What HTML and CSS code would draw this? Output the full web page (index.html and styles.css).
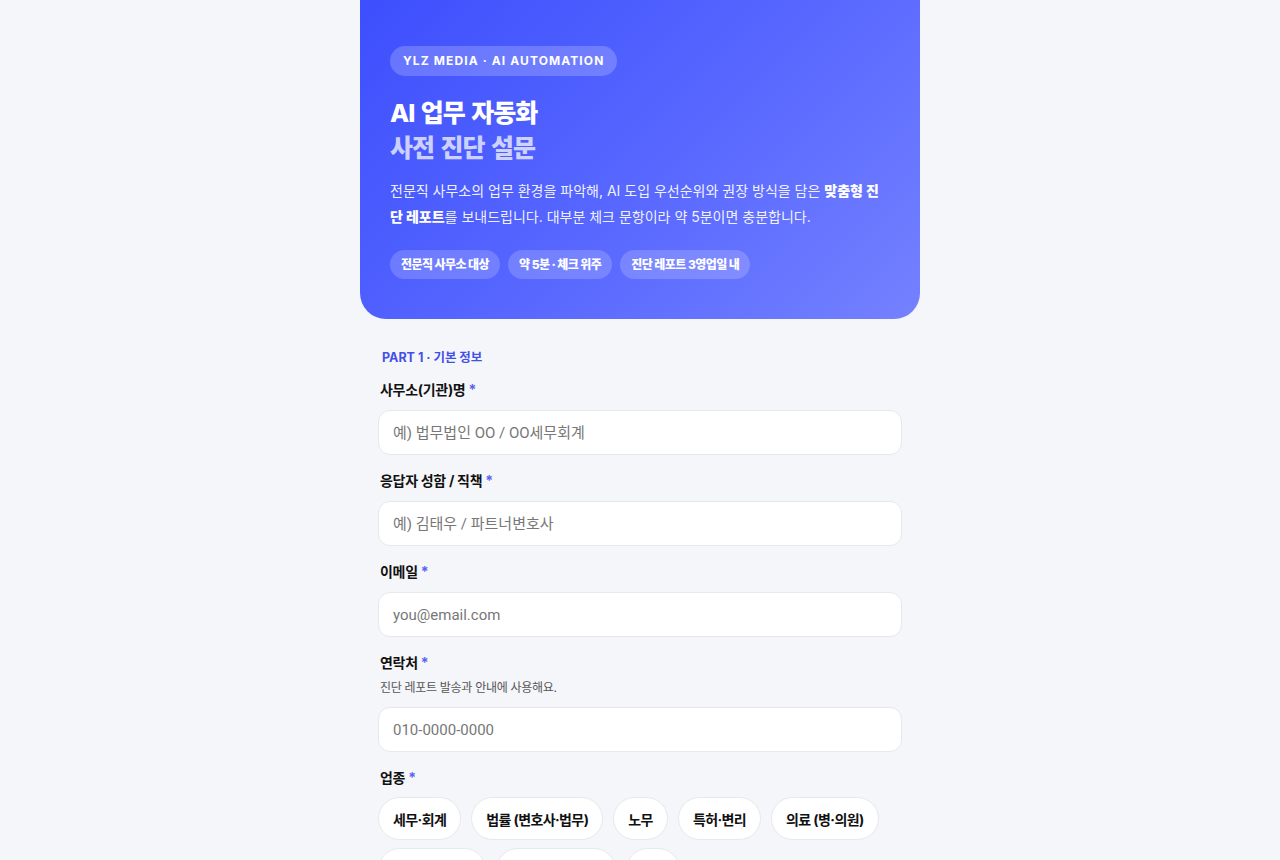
FILE: index.html
```html
<!DOCTYPE html>
<html lang="ko">
<head>
<meta charset="utf-8">
<link rel="stylesheet" href="styles.css">
</head>
<body>

<div class="survey">
  <!-- 상단 소개 -->
  <header class="hero">
    <span class="hero-badge">YLZ MEDIA · AI AUTOMATION</span>
    <h1 class="hero-title">AI 업무 자동화<span>사전 진단 설문</span></h1>
    <p class="hero-desc">전문직 사무소의 업무 환경을 파악해, AI 도입 우선순위와 권장 방식을 담은 <strong>맞춤형 진단 레포트</strong>를 보내드립니다. 대부분 체크 문항이라 약 5분이면 충분합니다.</p>
    <div class="hero-tags">
      <span class="hero-tag">전문직 사무소 대상</span>
      <span class="hero-tag">약 5분 · 체크 위주</span>
      <span class="hero-tag">진단 레포트 3영업일 내</span>
    </div>
  </header>

  <!-- PART 1 -->
  <form class="survey-form">
    <div class="part-title">PART 1 · 기본 정보</div>

    <div class="field">
      <label>사무소(기관)명 <em>*</em></label>
      <input type="text" placeholder="예) 법무법인 OO / OO세무회계">
    </div>

    <div class="field">
      <label>응답자 성함 / 직책 <em>*</em></label>
      <input type="text" placeholder="예) 김태우 / 파트너변호사">
    </div>

    <div class="field">
      <label>이메일 <em>*</em></label>
      <input type="email" placeholder="you@email.com">
    </div>

    <div class="field">
      <label>연락처 <em>*</em></label>
      <div class="hint">진단 레포트 발송과 안내에 사용해요.</div>
      <input type="tel" placeholder="010-0000-0000">
    </div>

    <div class="field">
      <label>업종 <em>*</em></label>
      <div class="choices">
        <button type="button" class="choice">세무·회계</button>
        <button type="button" class="choice">법률 (변호사·법무)</button>
        <button type="button" class="choice">노무</button>
        <button type="button" class="choice">특허·변리</button>
        <button type="button" class="choice">의료 (병·의원)</button>
        <button type="button" class="choice">관세·감정평가</button>
        <button type="button" class="choice">공공기관·비영리</button>
        <button type="button" class="choice">기타</button>
      </div>
    </div>
  </form>
</div>

</body>
</html>
```

FILE: styles.css
```css
/* 기본 */
* {
  box-sizing: border-box;
}
body {
  margin: 0;
  background: #f5f6fa;
  font-family: "Inter", "Noto Sans CJK KR", sans-serif;
  color: #111;
}
.survey {
  width: 560px;
  margin: 0 auto;
}

/* 상단 소개 */
.hero {
  background: linear-gradient(135deg, #3d4ffd 0%, #5666ff 50%, #7481ff 100%);
  border-radius: 0 0 26px 26px;
  padding: 46px 30px 40px;
  color: #fff;
}
.hero-badge {
  display: inline-block;
  height: 30px;
  line-height: 30px;
  padding: 0 13px;
  border-radius: 15px;
  background: rgba(255, 255, 255, 0.2);
  font-size: 12px;
  font-weight: 700;
  letter-spacing: 1.1px;
}
.hero-title {
  margin: 20px 0 0;
  font-size: 25px;
  font-weight: 800;
  line-height: 35px;
  letter-spacing: -1px;
  word-spacing: 2px;
}
.hero-title span {
  display: block;
  color: rgba(255, 255, 255, 0.72);
}
.hero-desc {
  margin: 12px 0 0;
  font-size: 14px;
  line-height: 26px;
  letter-spacing: 0;
  word-break: break-all;
  color: rgba(255, 255, 255, 0.93);
}
.hero-desc strong {
  color: #fff;
  font-weight: 800;
}
.hero-tags {
  display: flex;
  gap: 8px;
  margin-top: 20px;
}
.hero-tag {
  height: 29px;
  line-height: 29px;
  padding: 0 11px;
  border-radius: 15px;
  background: rgba(255, 255, 255, 0.18);
  font-size: 12px;
  font-weight: 800;
  letter-spacing: -0.55px;
}

/* 설문 폼 */
.survey-form {
  padding: 30px 18px 40px;
}
.part-title {
  padding-left: 4px;
  margin-bottom: 12px;
  font-size: 12.5px;
  font-weight: 700;
  color: #4350e8;
  line-height: 18px;
}
.field {
  margin-bottom: 15px;
}
.field label {
  display: block;
  margin-bottom: 10px;
  padding-left: 2px;
  font-size: 14px;
  font-weight: 700;
  line-height: 21px;
  letter-spacing: -0.3px;
}
.field label em {
  font-style: normal;
  color: #5a63f0;
}
.hint {
  margin: -4px 0 10px;
  padding-left: 2px;
  font-size: 12px;
  line-height: 18px;
  color: #555;
  letter-spacing: -0.3px;
}
.field input {
  display: block;
  width: 100%;
  height: 45px;
  padding: 0 14px;
  border: 1px solid #e6e8ef;
  border-radius: 12px;
  background: #fff;
  font-family: "Roboto", "Noto Sans CJK KR", sans-serif;
  font-size: 15px;
  color: #111;
  outline: none;
}
.field input::placeholder {
  color: #777;
}

/* 선택 버튼 */
.choices {
  display: flex;
  flex-wrap: wrap;
  gap: 8px 10px;
  margin-top: -1px;
}
.choice {
  height: 43px;
  padding: 0 14px;
  border: 1px solid #e6e8ef;
  border-radius: 22px;
  background: #fff;
  font-family: "Inter", "Noto Sans CJK KR", sans-serif;
  font-size: 14px;
  font-weight: 700;
  letter-spacing: -0.6px;
  color: #111;
  cursor: pointer;
}
```
